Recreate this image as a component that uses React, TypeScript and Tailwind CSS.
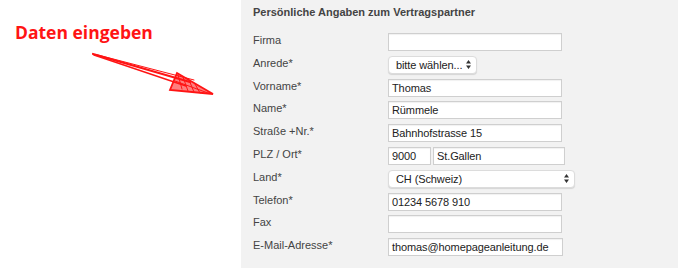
const font = { fontFamily: '"Liberation Sans", Arial, sans-serif' };

type Field = { label: string; value?: string; kind?: "select" | "plz"; width?: string };

const fields: Field[] = [
  { label: "Firma" },
  { label: "Anrede*", value: "bitte wählen...", kind: "select", width: "w-[89px]" },
  { label: "Vorname*", value: "Thomas" },
  { label: "Name*", value: "Rümmele" },
  { label: "Straße +Nr.*", value: "Bahnhofstrasse 15" },
  { label: "PLZ / Ort*", kind: "plz" },
  { label: "Land*", value: "CH (Schweiz)", kind: "select", width: "w-[187px]" },
  { label: "Telefon*", value: "01234 5678 910" },
  { label: "Fax" },
  { label: "E-Mail-Adresse*", value: "thomas@homepageanleitung.de", width: "w-[175px]" },
];

function TextBox({ value, className }: { value?: string; className: string }) {
  return (
    <div
      className={`h-[18px] bg-white border border-[#cfcfcf] shadow-[inset_0_1px_1px_rgba(0,0,0,0.06)] px-[3px] text-[11px] tracking-[-0.1px] leading-[16px] text-[#222] whitespace-nowrap overflow-hidden ${className}`}
    >
      {value}
    </div>
  );
}

function SelectBox({ value, className }: { value: string; className: string }) {
  return (
    <div
      className={`h-[18px] bg-white rounded-[4px] border border-[#dcdcdc] shadow-[0_1px_1px_rgba(0,0,0,0.12)] flex items-center justify-between pl-[7px] pr-[5px] text-[11px] tracking-[-0.1px] text-[#222] whitespace-nowrap ${className}`}
    >
      <span className="leading-[16px]">{value}</span>
      <svg width="5" height="9" viewBox="0 0 5 9" className="shrink-0">
        <path d="M2.5 0 L5 3.5 L0 3.5 Z M2.5 9 L5 5.5 L0 5.5 Z" fill="#333" />
      </svg>
    </div>
  );
}

function Arrow() {
  return (
    <svg width="130" height="50" viewBox="0 0 130 50" className="ml-[90px] mt-[9px]">
      <g stroke="#ff1414" fill="none" strokeLinecap="round">
        <path d="M3 3 L100 31" strokeWidth="2.2" />
        <path d="M4 4 L96 35" strokeWidth="1.4" />
        <path d="M6 3.5 L104 29" strokeWidth="1" />
        <path d="M87 22 L123 43 L80 39 Z" strokeWidth="1.8" fill="#ff1414" fillOpacity="0.55" />
        <path d="M88 24 L92 38 M93 26 L98 40 M99 29 L104 41 M105 33 L110 42 M85 30 L118 42" strokeWidth="1" />
      </g>
    </svg>
  );
}

export default function App() {
  return (
    <div className="w-[678px] h-[269px] flex bg-white overflow-hidden" style={font}>
      <div className="w-[241px] shrink-0 flex flex-col pt-[22px] pl-[15px]">
        <div
          className="text-[17.5px] font-bold leading-[20px] text-[#ff1414]"
          style={{ fontFamily: '"Open Sans", "Liberation Sans", sans-serif' }}
        >
          Daten eingeben
        </div>
        <div className="-ml-[15px]">
          <Arrow />
        </div>
      </div>

      <div className="flex-1 h-[268px] bg-[#f2f2f2] pl-[12px] pt-[5px]">
        <h2 className="text-[11px] font-bold leading-[14px] text-[#444]">
          Persönliche Angaben zum Vertragspartner
        </h2>
        <div className="mt-[14px] flex flex-col gap-[4.8px]">
          {fields.map((f) => (
            <div key={f.label} className="flex items-start h-[18px]">
              <label className="w-[135px] shrink-0 text-[11px] leading-[14px] text-[#444]">
                {f.label}
              </label>
              {f.kind === "select" ? (
                <SelectBox value={f.value ?? ""} className={f.width ?? ""} />
              ) : f.kind === "plz" ? (
                <div className="flex gap-[2px]">
                  <TextBox value="9000" className="w-[43px]" />
                  <TextBox value="St.Gallen" className="w-[132px]" />
                </div>
              ) : (
                <TextBox value={f.value} className={f.width ?? "w-[174px]"} />
              )}
            </div>
          ))}
        </div>
      </div>
    </div>
  );
}
